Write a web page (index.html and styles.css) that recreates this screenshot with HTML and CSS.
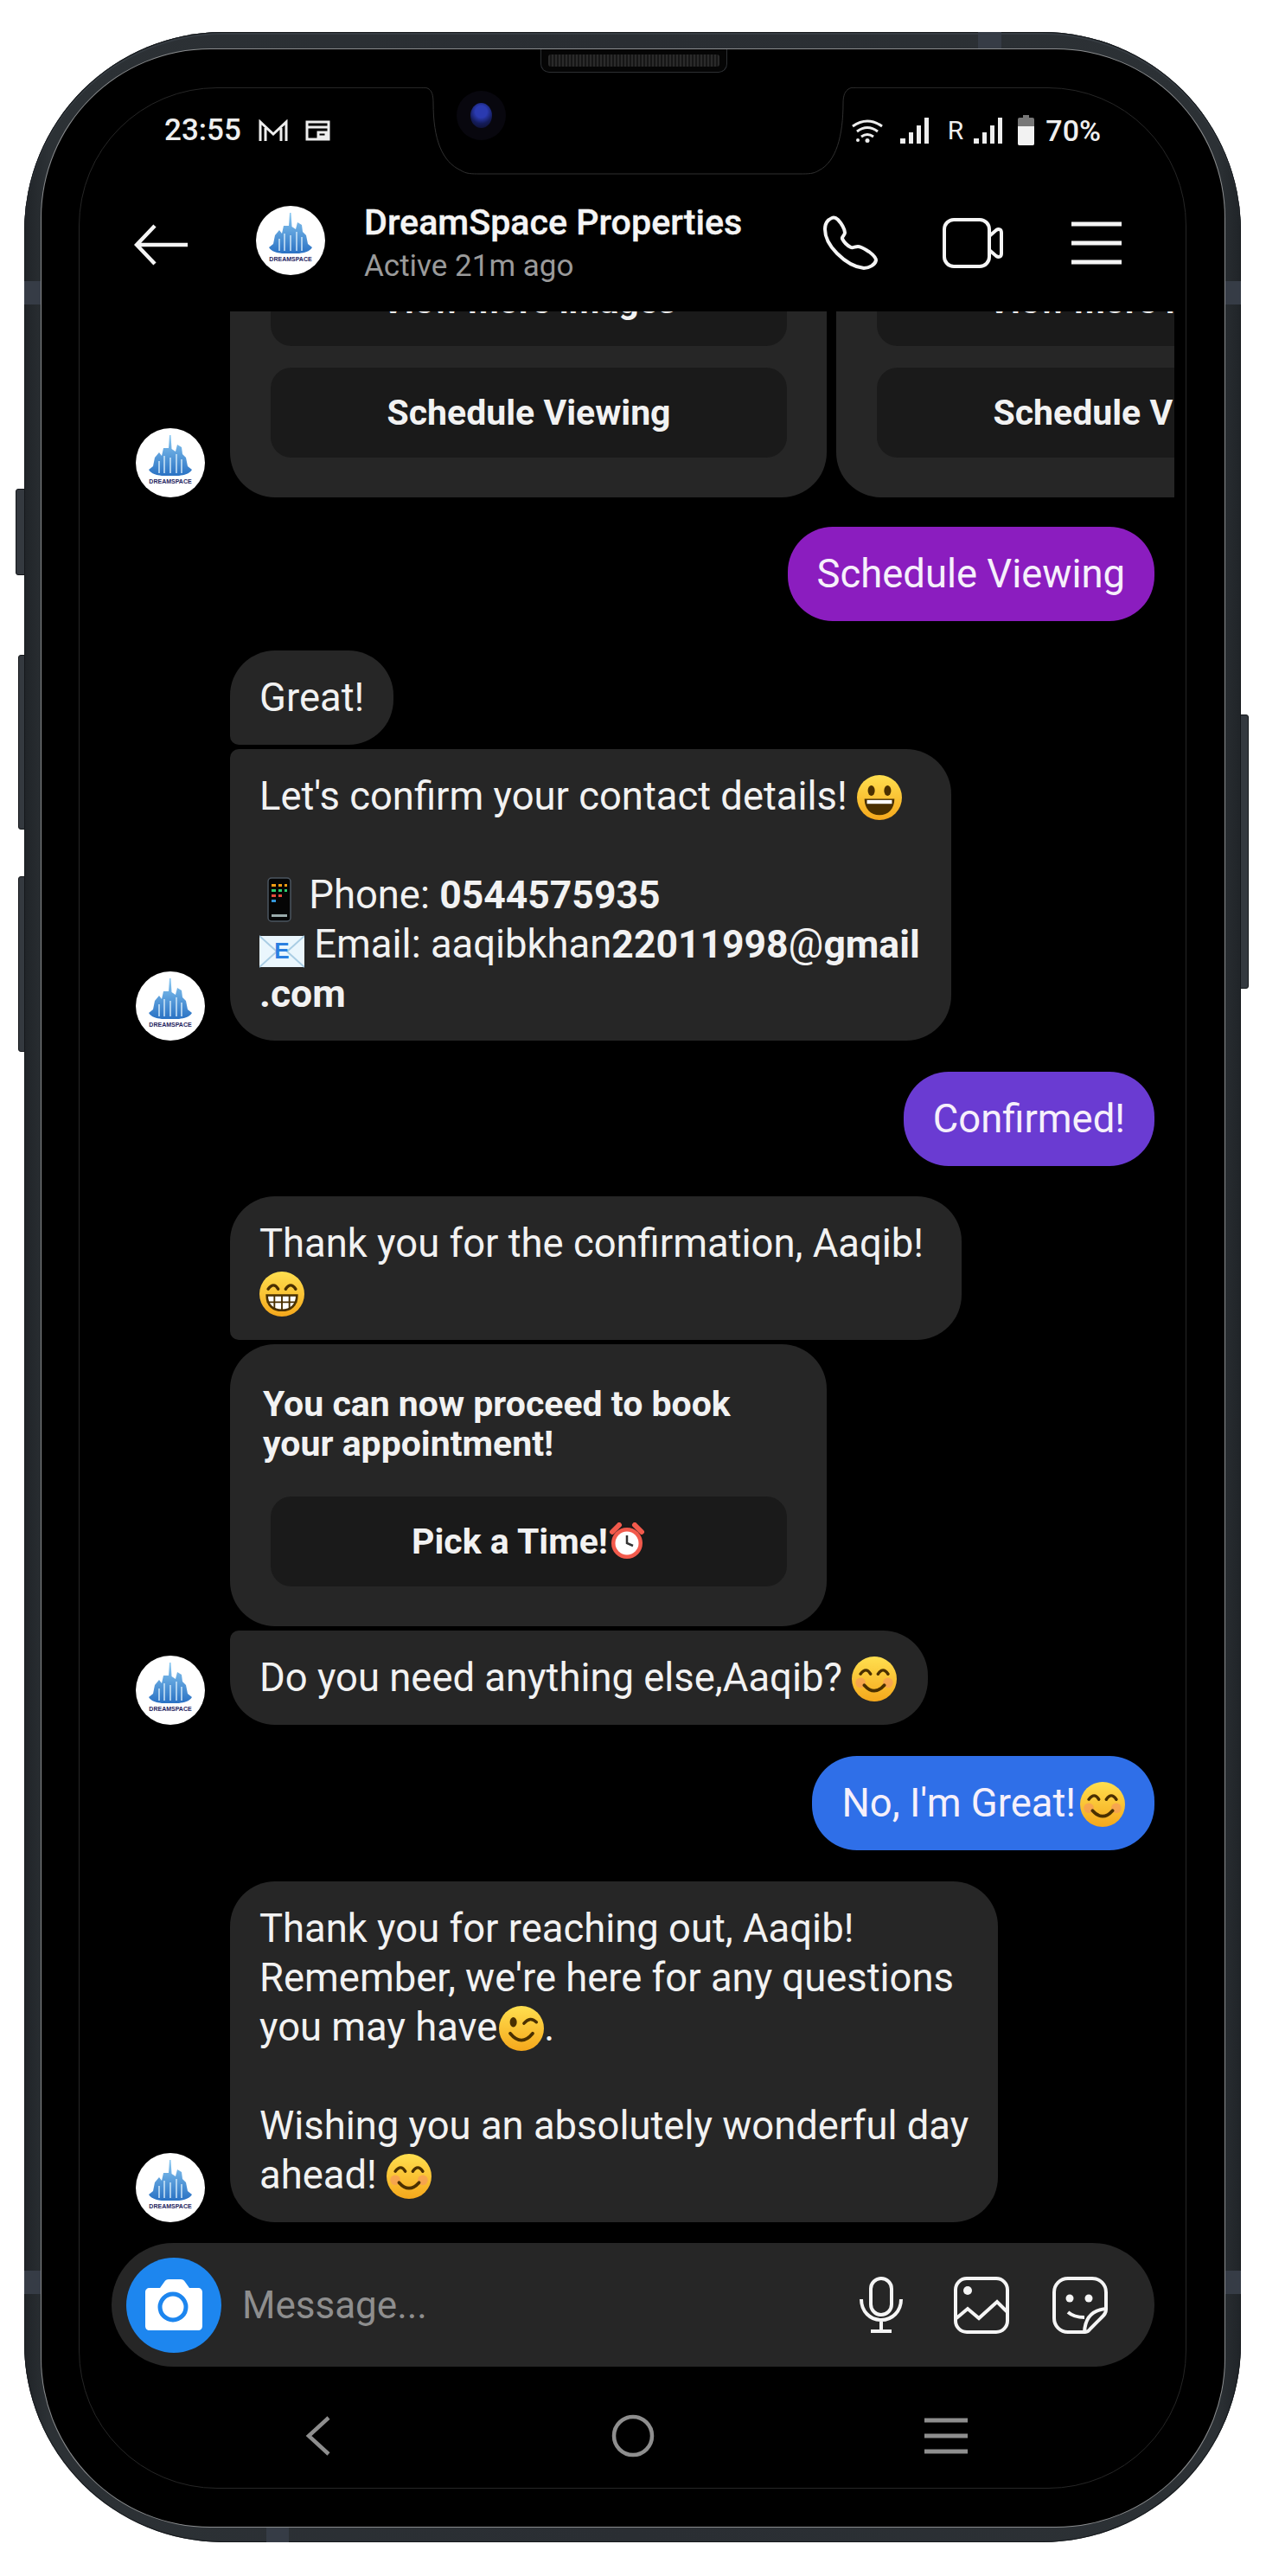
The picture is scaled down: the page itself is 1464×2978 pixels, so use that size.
FILE: index.html
```html
<!DOCTYPE html>
<html lang="en">
<head>
<meta charset="utf-8">
<title>DreamSpace Properties chat</title>
<link rel="stylesheet" href="styles.css">
</head>
<body>
<svg class="defs" width="0" height="0" aria-hidden="true">
  <defs>
    <linearGradient id="yel" x1="0" y1="0" x2="0" y2="1"><stop offset="0" stop-color="#ffdf4f"/><stop offset="1" stop-color="#f5a81c"/></linearGradient>
    <linearGradient id="sky" x1="0" y1="0" x2="0" y2="1"><stop offset="0" stop-color="#8ccaf2"/><stop offset="1" stop-color="#2a72c4"/></linearGradient>
    <symbol id="logo" viewBox="0 0 80 80">
      <circle cx="40" cy="40" r="40" fill="#fff"/>
      <path d="M39 8 L40.500 8 L41.500 24 L46 27 L48 19 L53 22 L54 30 L58 34 L60 44 L65 48 C62 53 56 54 50 55 L30 55 C24 54 18 53 15 48 L20 44 L22 34 L27 28 L30 32 L32 23 L38 23Z" fill="url(#sky)"/>
      <path d="M27 38v14M33 32v20M40 34v18M47 30v22M53 36v16" stroke="#d7ebfa" stroke-width="1.400"/>
      <text x="40" y="64" class="logo-txt" text-anchor="middle">DREAMSPACE</text>
    </symbol>
    <symbol id="e-smile" viewBox="0 0 36 36">
      <circle cx="18" cy="18" r="18" fill="url(#yel)"/>
      <ellipse cx="11.500" cy="12.500" rx="2.800" ry="4.200" fill="#4a3000"/><ellipse cx="24.500" cy="12.500" rx="2.800" ry="4.200" fill="#4a3000"/>
      <path d="M6 19 H30 C30 27 25 32 18 32 C11 32 6 27 6 19Z" fill="#4a3000"/><path d="M8 20 H28 V23 H8Z" fill="#fff"/>
    </symbol>
    <symbol id="e-blush" viewBox="0 0 36 36">
      <circle cx="18" cy="18" r="18" fill="url(#yel)"/>
      <circle cx="7" cy="21" r="4" fill="#f59a5a" opacity=".7"/><circle cx="29" cy="21" r="4" fill="#f59a5a" opacity=".7"/>
      <path d="M7 14 Q11.500 8 15 14M21 14 Q25 8 29 14" fill="none" stroke="#4a3000" stroke-width="2.400" stroke-linecap="round"/>
      <path d="M10 23 Q18 32 26 23" fill="none" stroke="#4a3000" stroke-width="2.600" stroke-linecap="round"/>
    </symbol>
    <symbol id="e-grin" viewBox="0 0 36 36">
      <circle cx="18" cy="18" r="18" fill="url(#yel)"/>
      <path d="M7 14 Q11.500 8 15 14M21 14 Q25 8 29 14" fill="none" stroke="#4a3000" stroke-width="2.400" stroke-linecap="round"/>
      <path d="M6 19 H30 C30 27 25 31 18 31 C11 31 6 27 6 19Z" fill="#fff" stroke="#4a3000" stroke-width="1.800"/>
      <path d="M6 24.500H30M12 19v11M18 19v12M24 19v11" stroke="#4a3000" stroke-width="1.300"/>
    </symbol>
    <symbol id="e-wink" viewBox="0 0 36 36">
      <circle cx="18" cy="18" r="18" fill="url(#yel)"/>
      <ellipse cx="11.500" cy="13" rx="2.800" ry="4" fill="#4a3000"/>
      <path d="M20 14 Q25 8 30 13" fill="none" stroke="#4a3000" stroke-width="2.400" stroke-linecap="round"/>
      <path d="M9 22 Q18 33 27 22" fill="none" stroke="#4a3000" stroke-width="2.600" stroke-linecap="round"/>
    </symbol>
    <symbol id="e-phone" viewBox="0 0 36 52">
      <rect x="5" y="1" width="26" height="50" rx="4" fill="#050505" stroke="#4b5560" stroke-width="1.500"/>
      <path d="M9 8h5v3H9zM17 8h4v3h-4zM24 8h3v3h-3z" fill="#f39c12"/><path d="M9 14h5v3H9zM17 14h4v3h-4zM24 14h3v3h-3z" fill="#2ecc71"/><path d="M9 20h5v3H9zM17 20h4v3h-4z" fill="#e74c3c"/><path d="M9 26h5v3H9z" fill="#3498db"/>
      <path d="M9 43h18v3H9z" fill="#9aa"/>
    </symbol>
    <symbol id="e-mail" viewBox="0 0 52 38">
      <rect x="0" y="1" width="52" height="36" fill="#eaf6fd"/>
      <path d="M0 1 L20 19 L0 37M52 1 L32 19 L52 37" fill="none" stroke="#a9cde4" stroke-width="2"/>
      <text x="26" y="27" class="mail-e" text-anchor="middle">E</text>
    </symbol>
    <symbol id="e-clock" viewBox="0 0 44 44">
      <path d="M5 11 L13 3M39 11 L31 3" stroke="#f25a4c" stroke-width="6" stroke-linecap="round"/>
      <circle cx="22" cy="24" r="18" fill="#f25a4c"/><circle cx="22" cy="24" r="13.500" fill="#fff"/>
      <path d="M22 15V24L29 27" fill="none" stroke="#333" stroke-width="2.500"/>
    </symbol>
  </defs>
</svg>

<main class="phone">
  <span class="side side-l1"></span>
  <span class="side side-l2"></span>
  <span class="side side-l3"></span>
  <span class="side side-r"></span>
  <span class="band band-top"></span>
  <span class="band band-bottom"></span>
  <span class="band band-vert band-l1"></span>
  <span class="band band-vert band-r1"></span>
  <span class="band band-vert band-l2"></span>
  <span class="band band-vert band-r2"></span>

  <div class="glass">
    <div class="speaker"><span class="mesh"></span></div>
    <svg class="notch" width="504" height="104" viewBox="0 0 504 104" aria-hidden="true">
      <path d="M1 0 C10 0 14 4 14 18 C14 60 24 86 46 96 C52 100 58 100 68 100 H438 C448 100 454 100 460 96 C480 86 488 56 488 18 C488 4 494 0 502 0" fill="#000" stroke="#303030" stroke-width="1"/>
    </svg>
    <span class="camera"><span class="lens"></span></span>

    <div class="screen">
      <div class="status">
        <div class="status-left">
          <span class="clock">23:55</span>
          <svg class="st-icon" width="34" height="26" viewBox="0 0 34 26" aria-hidden="true"><path d="M2 25V3L17 17L32 3V25M8 25V10M26 25V10" fill="none" stroke="#eee" stroke-width="3"/></svg>
          <svg class="st-icon" width="29" height="24" viewBox="0 0 29 24" aria-hidden="true"><path d="M2 2H27V22H2ZM2 8H27M15 14H24V19H15Z" fill="none" stroke="#eee" stroke-width="3"/></svg>
        </div>
        <div class="status-right">
          <svg class="st-wifi" width="36" height="28" viewBox="0 0 36 28" aria-hidden="true"><g fill="none" stroke="#eee" stroke-width="3"><path d="M1 9 Q18 -3 35 9"/><path d="M6 15 Q18 6 30 15"/><path d="M11 21 Q18 16 25 21"/></g><circle cx="18" cy="25.500" r="2.500" fill="#eee"/><circle cx="7" cy="25" r="2" fill="#eee"/></svg>
          <svg class="st-sig" width="34" height="30" viewBox="0 0 34 30" aria-hidden="true"><path d="M0 24h6v6H0zM10 17h5v13h-5zM19 9h5v21h-5zM28 0h5v30h-5z" fill="#eee"/></svg>
          <span class="st-r">R</span>
          <svg class="st-sig2" width="34" height="30" viewBox="0 0 34 30" aria-hidden="true"><path d="M0 24h6v6H0zM10 17h5v13h-5zM19 9h5v21h-5zM28 0h5v30h-5z" fill="#eee"/></svg>
          <svg class="st-bat" width="19" height="35" viewBox="0 0 19 35" aria-hidden="true"><path d="M6 0h7v3h4a2 2 0 0 1 2 2v28a2 2 0 0 1-2 2H2a2 2 0 0 1-2-2V5a2 2 0 0 1 2-2h4z" fill="#777"/><path d="M0 13H19V33a2 2 0 0 1-2 2H2a2 2 0 0 1-2-2z" fill="#f2f2f2"/></svg>
          <span class="st-pct">70%</span>
        </div>
      </div>

      <header class="head">
        <svg class="head-back" width="64" height="48" viewBox="0 0 64 48" aria-hidden="true"><path d="M62 24H4M24 2L3 24L24 46" fill="none" stroke="#f5f5f5" stroke-width="4.500"/></svg>
        <svg class="head-ava" width="80" height="80" aria-hidden="true"><use href="#logo"/></svg>
        <div class="head-text">
          <div class="head-name">DreamSpace Properties</div>
          <div class="head-sub">Active 21m ago</div>
        </div>
        <div class="head-actions">
          <svg class="ic-call" width="64" height="64" viewBox="0 0 64 64" aria-hidden="true"><path d="M10 3C5 5 2 10 2 16C2 26 8 36 16 44C24 52 36 60 47 61C53 61 60 57 61 52C61 49 57 45 53 42C48 39 44 36 40 36C37 36 34 38 32 37C28 35 24 31 22 27C21 25 25 23 25 20C25 16 21 9 17 5C15 3 12 2 10 3Z" fill="none" stroke="#f5f5f5" stroke-width="4"/></svg>
          <svg class="ic-video" width="70" height="58" viewBox="0 0 70 58" aria-hidden="true"><rect x="2" y="2" width="52" height="54" rx="11" fill="none" stroke="#f5f5f5" stroke-width="4"/><path d="M54 21L62 14C65 12 68 13 68 17V41C68 45 65 46 62 44L54 37" fill="none" stroke="#f5f5f5" stroke-width="4"/></svg>
          <svg class="ic-menu" width="58" height="50" viewBox="0 0 58 50" aria-hidden="true"><path d="M0 3H58M0 25H58M0 47H58" stroke="#f5f5f5" stroke-width="5"/></svg>
        </div>
      </header>

      <section class="chat">
        <div class="row">
          <svg class="ava" width="80" height="80" aria-hidden="true"><use href="#logo"/></svg>
          <div class="carousel">
            <div class="card card-wide">
              <div class="cbtn">View more images</div>
              <div class="cbtn">Schedule Viewing</div>
            </div>
            <div class="card card-wide">
              <div class="cbtn">View more images</div>
              <div class="cbtn">Schedule Viewing</div>
            </div>
          </div>
        </div>

        <div class="me me-purple gap-34">Schedule Viewing</div>

        <div class="row gap-34">
          <svg class="ava" width="80" height="80" aria-hidden="true"><use href="#logo"/></svg>
          <div class="stack">
            <div class="msg msg-first">Great!</div>
            <div class="msg msg-last">Let's confirm your contact details! <svg class="emoji" aria-label="smiling face"><use href="#e-smile"/></svg><br><br><svg class="emoji emoji-phone" aria-label="mobile phone"><use href="#e-phone"/></svg> Phone: <b>0544575935</b><br><svg class="emoji emoji-mail" aria-label="e-mail"><use href="#e-mail"/></svg> Email: aaqibkhan<b>22011998</b>@<b>gmail</b><br><b>.com</b></div>
          </div>
        </div>

        <div class="me me-violet gap-36">Confirmed!</div>

        <div class="row gap-35">
          <svg class="ava" width="80" height="80" aria-hidden="true"><use href="#logo"/></svg>
          <div class="stack">
            <div class="msg msg-first msg-wrapped">Thank you for the confirmation, Aaqib!<br><svg class="emoji" aria-label="grinning face"><use href="#e-grin"/></svg></div>
            <div class="card card-note msg-mid">
              <div class="note">You can now proceed to book<br>your appointment!</div>
              <div class="cbtn">Pick a Time!<svg class="emoji emoji-clock" aria-label="alarm clock"><use href="#e-clock"/></svg></div>
            </div>
            <div class="msg msg-last">Do you need anything else,Aaqib? <svg class="emoji" aria-label="smiling face"><use href="#e-blush"/></svg></div>
          </div>
        </div>

        <div class="me me-blue gap-36">No, I'm Great!<svg class="emoji emoji-tight" aria-label="smiling face"><use href="#e-blush"/></svg></div>

        <div class="row gap-36">
          <svg class="ava" width="80" height="80" aria-hidden="true"><use href="#logo"/></svg>
          <div class="stack">
            <div class="msg">Thank you for reaching out, Aaqib!<br>Remember, we're here for any questions<br>you may have<svg class="emoji emoji-tight" aria-label="winking face"><use href="#e-wink"/></svg>.<br><br>Wishing you an absolutely wonderful day<br>ahead! <svg class="emoji" aria-label="smiling face"><use href="#e-blush"/></svg></div>
          </div>
        </div>
      </section>

      <div class="composer">
        <span class="cam">
          <svg width="68" height="60" viewBox="0 0 68 60" aria-hidden="true"><path d="M6 10H18L23 3C24 1 26 0 28 0H42C44 0 46 1 47 3L52 10H62C65 10 67 12 67 15V54C67 57 65 59 62 59H6C3 59 1 57 1 54V15C1 12 3 10 6 10Z" fill="#fff"/><circle cx="33" cy="32" r="15" fill="#fff" stroke="#1d86ef" stroke-width="5"/></svg>
        </span>
        <span class="placeholder">Message...</span>
        <div class="tools">
          <svg class="tool-mic" width="50" height="66" viewBox="0 0 50 66" aria-hidden="true"><g fill="none" stroke="#f5f5f5" stroke-width="4"><rect x="13" y="2" width="24" height="42" rx="12"/><path d="M2 26C2 40 12 50 25 50C38 50 48 40 48 26M25 50V63M13 63H37"/></g></svg>
          <svg width="64" height="66" viewBox="0 0 64 66" aria-hidden="true"><g fill="none" stroke="#f5f5f5" stroke-width="4"><rect x="2" y="2" width="60" height="62" rx="13"/><path d="M3 48L16 37L29 48L50 29L62 41"/></g><circle cx="16" cy="16" r="5" fill="#f5f5f5"/></svg>
          <svg width="64" height="66" viewBox="0 0 64 66" aria-hidden="true"><g fill="none" stroke="#f5f5f5" stroke-width="4"><path d="M38 64H18C9 64 2 57 2 48V18C2 9 9 2 18 2H46C55 2 62 9 62 18V38C62 42 60 44 57 47L44 60C42 63 40 64 38 64Z"/><path d="M18 41C25 47 32 47 37 47M62 37C50 38 38 44 37 64"/></g><circle cx="20" cy="25" r="4.500" fill="#f5f5f5"/><circle cx="42" cy="25" r="4.500" fill="#f5f5f5"/></svg>
        </div>
      </div>

      <nav class="navbar">
        <svg width="30" height="46" viewBox="0 0 30 46" aria-hidden="true"><path d="M27 2L4 23L27 44" fill="none" stroke="#8e8e8e" stroke-width="4.500"/></svg>
        <svg class="nav-home" width="50" height="50" viewBox="0 0 50 50" aria-hidden="true"><circle cx="25" cy="25" r="22" fill="none" stroke="#8e8e8e" stroke-width="4.500"/></svg>
        <svg class="nav-menu" width="50" height="42" viewBox="0 0 50 42" aria-hidden="true"><path d="M0 3H50M0 21H50M0 39H50" stroke="#8e8e8e" stroke-width="5"/></svg>
      </nav>
    </div>
  </div>
</main>
</body>
</html>
```

FILE: styles.css
```css
* { box-sizing: border-box; }
html, body { margin: 0; padding: 0; }
body {
  width: 1464px;
  height: 2978px;
  background: #fff;
  font-family: Roboto, "Noto Sans", sans-serif;
  color: #f2f2f2;
  overflow: hidden;
}
.defs { position: absolute; }
.logo-txt { font: 700 7px "Liberation Sans", sans-serif; fill: #1f2460; }
.mail-e { font: 700 26px "Liberation Sans", sans-serif; fill: #2a7fe0; }

/* device */
.phone {
  position: relative;
  width: 1407px;
  height: 2902px;
  margin: 37px 0 0 28px;
  padding: 20px 19px 18px 20px;
  border-radius: 230px;
  background: linear-gradient(90deg, #202428, #2c3135 2%, #2a2e33 50%, #2c3135 98%, #202428);
  box-shadow: inset 0 0 0 1px #16191c, inset 0 2px 0 1px #363c42;
}
.side {
  position: absolute;
  background: #34393f;
  border: 1px solid #14171a;
}
.side-l1 { left: -10px; top: 528px; width: 11px; height: 100px; border-radius: 3px 0 0 3px; }
.side-l2 { left: -7px; top: 720px; width: 8px; height: 202px; border-radius: 3px 0 0 3px; }
.side-l3 { left: -7px; top: 976px; width: 8px; height: 203px; border-radius: 3px 0 0 3px; }
.side-r { right: -9px; top: 789px; width: 10px; height: 317px; border-radius: 0 3px 3px 0; }
.band { position: absolute; background: #363c46; }
.band-top { left: 1103px; top: 0; width: 27px; height: 19px; }
.band-bottom { left: 280px; bottom: 0; width: 26px; height: 18px; }
.band-vert { width: 19px; height: 27px; }
.band-l1 { left: 0; top: 288px; }
.band-r1 { right: 0; top: 288px; }
.band-l2 { left: 0; top: 2588px; }
.band-r2 { right: 0; top: 2588px; }

.glass {
  position: relative;
  height: 100%;
  padding: 44px 44px 44px 43px;
  background: #000;
  border-radius: 195px;
  box-shadow: 0 0 0 1px #8b8d8f;
}
.speaker {
  position: absolute;
  left: 577px;
  top: 0;
  width: 216px;
  height: 27px;
  padding: 6px 8px 0;
  background: #050505;
  border: 1px solid #2c2f32;
  border-top: 0;
  border-radius: 0 0 10px 10px;
}
.mesh {
  display: block;
  height: 14px;
  border-radius: 3px;
  background: repeating-linear-gradient(90deg, #2a2a2a 0 2px, #161616 2px 4px);
}
.notch { position: absolute; left: 439px; top: 44px; z-index: 2; }
.camera {
  position: absolute;
  left: 480px;
  top: 48px;
  z-index: 3;
  display: flex;
  align-items: center;
  justify-content: center;
  width: 57px;
  height: 57px;
  border-radius: 50%;
  background: #08070e;
}
.lens {
  width: 25px;
  height: 29px;
  border-radius: 50%;
  background: radial-gradient(circle at 50% 35%, #2a3ab0 0 30%, #141c5a 60%, #0c0c24);
}

.screen {
  display: flex;
  flex-direction: column;
  height: 100%;
  border: 1px solid #262626;
  border-radius: 160px;
  overflow: hidden;
}

/* status bar */
.status {
  flex: none;
  display: flex;
  align-items: center;
  justify-content: space-between;
  height: 97px;
  padding: 0 98px 0 98px;
  position: relative;
  z-index: 4;
  color: #efefef;
}
.status-left, .status-right { display: flex; align-items: center; }
.clock { font-size: 35px; font-weight: 500; margin-right: 20px; }
.st-icon + .st-icon { margin-left: 20px; }
.st-wifi { margin-right: 2px; }
.st-sig { margin-left: 18px; }
.st-r { font-size: 30px; margin-left: 21px; }
.st-sig2 { margin-left: 12px; }
.st-bat { margin-left: 17px; }
.st-pct { font-size: 34px; font-weight: 500; margin-left: 13px; }

/* chat header */
.head {
  flex: none;
  display: flex;
  align-items: center;
  height: 161px;
  padding: 0 74px 3px 63px;
}
.head-back { margin: 10px 77px 0 0; }
.head-ava { margin-right: 45px; }
.head-text { flex: 1; margin-top: 8px; }
.head-name { font-size: 41.2px; font-weight: 500; line-height: 52px; color: #f5f5f5; -webkit-text-stroke: .4px #f5f5f5; }
.head-sub { font-size: 35px; line-height: 50px; color: #9a9a9a; }
.head-actions { display: flex; align-items: center; margin-top: 6px; }
.ic-video { margin-left: 74px; }
.ic-menu { margin-left: 79px; }

/* messages */
.chat {
  flex: 1;
  min-height: 0;
  display: flex;
  flex-direction: column;
  justify-content: flex-end;
  padding: 0 36px 24px 65px;
  overflow: hidden;
}
.chat > * { flex: none; }
.row { display: flex; align-items: flex-end; gap: 29px; }
.ava { flex: none; }
.stack { display: flex; flex-direction: column; align-items: flex-start; gap: 5px; }
.gap-34 { margin-top: 34px; }
.gap-35 { margin-top: 35px; }
.gap-36 { margin-top: 36px; }

.msg, .me {
  font-size: 45.4px;
  line-height: 57px;
  padding: 26px 34px;
  border-radius: 52px;
  white-space: nowrap;
}
.msg { background: #262626; }
.msg b { font-weight: 700; font-size: 44.5px; line-height: 1; }
.msg-first { border-bottom-left-radius: 10px; }
.msg-mid { border-top-left-radius: 10px; border-bottom-left-radius: 10px; }
.msg-last { border-top-left-radius: 10px; padding-right: 36px; }
.msg-wrapped { padding-right: 44px; }
.me { align-self: flex-end; color: #f6f0fb; }
.me-purple { background: #8b1dbf; }
.me-violet { background: #6a3bd2; }
.me-blue { background: #2f6fe8; }
.me-blue .emoji { margin-left: 5px; }

.emoji {
  display: inline-block;
  width: 52px;
  height: 52px;
  margin: -8px 0;
  vertical-align: -4px;
}
.emoji-tight { margin-left: 2px; }
.emoji-phone { width: 46px; height: 52px; vertical-align: -8px; }
.emoji-mail { width: 52px; height: 38px; vertical-align: -4px; }
.emoji-clock { width: 44px; height: 44px; vertical-align: -8px; }

.carousel { flex: none; display: flex; gap: 11px; width: 1092px; overflow: hidden; }
.card { flex: none; background: #262626; border-radius: 52px; }
.card-wide {
  width: 690px;
  display: flex;
  flex-direction: column;
  gap: 25px;
  padding: 20px 46px 46px 47px;
}
.card-note { width: 690px; padding: 46px 46px 46px 47px; }
.cbtn {
  height: 104px;
  display: flex;
  align-items: center;
  justify-content: center;
  border-radius: 24px;
  background: #1a1a1a;
  font-size: 41px;
  font-weight: 700;
  white-space: nowrap;
  color: #f2f2f2;
}
.note {
  margin: 0 0 38px -9px;
  font-size: 41px;
  font-weight: 700;
  line-height: 46px;
}

/* composer */
.composer {
  flex: none;
  display: flex;
  align-items: center;
  height: 143px;
  margin: 0 36px 0 37px;
  padding: 0 54px 0 17px;
  border-radius: 72px;
  background: #262626;
}
.cam {
  flex: none;
  display: flex;
  align-items: center;
  justify-content: center;
  width: 110px;
  height: 110px;
  border-radius: 50%;
  background: #1d86ef;
}
.placeholder { flex: 1; margin-left: 24px; font-size: 44px; color: #8e8e8e; }
.tools { display: flex; align-items: center; gap: 50px; }
.tool-mic { margin-right: 9px; }

/* android nav */
.navbar {
  flex: none;
  display: flex;
  align-items: center;
  height: 140px;
  padding: 20px 0 0 261px;
}
.nav-home { margin-left: 324px; }
.nav-menu { margin-left: 312px; }
```
